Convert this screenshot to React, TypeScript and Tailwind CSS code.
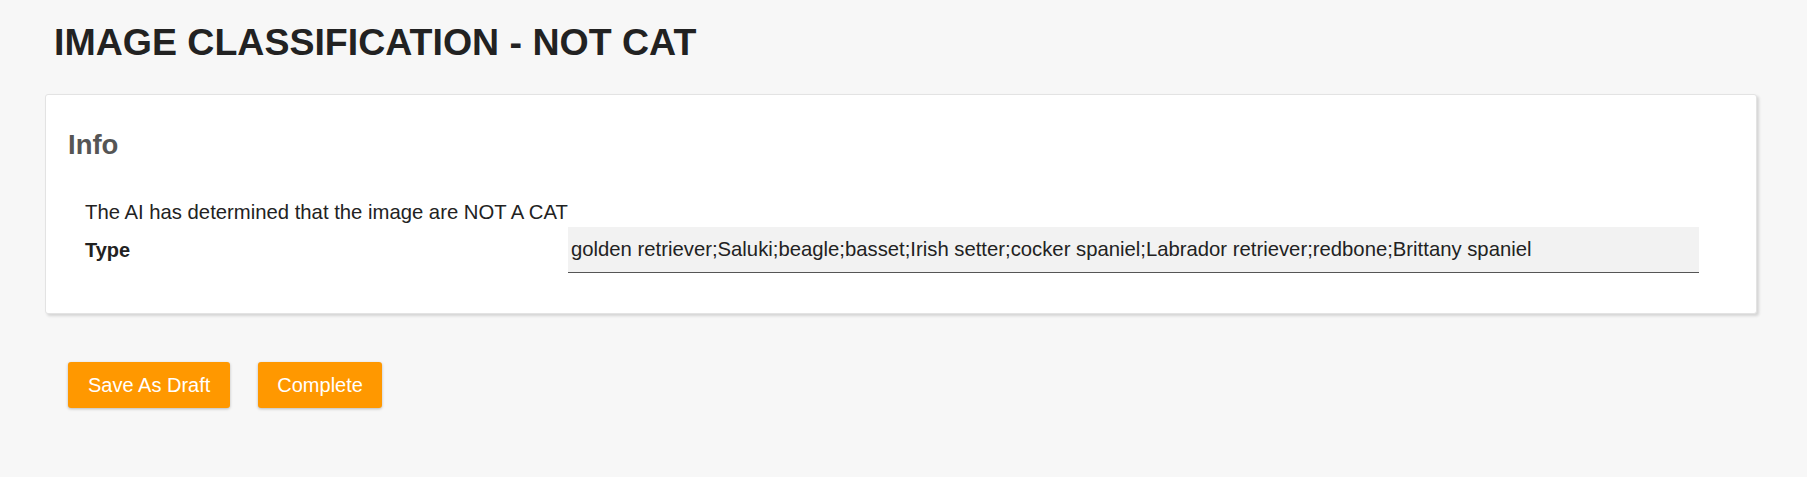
import React from 'react';

const BREEDS = [
  'golden retriever',
  'Saluki',
  'beagle',
  'basset',
  'Irish setter',
  'cocker spaniel',
  'Labrador retriever',
  'redbone',
  'Brittany spaniel',
];

export default function App() {
  return (
    <div className="min-h-screen bg-[#f7f7f7] pl-[45px] pr-[50px] text-[#222] font-['Liberation_Sans',Arial,sans-serif]">
      {/* Page title */}
      <h1 className="pt-[20px] pl-[9px] text-[37.5px] leading-[44px] font-bold">
        IMAGE CLASSIFICATION - NOT CAT
      </h1>

      {/* Info card */}
      <div className="mt-[30px] bg-white border border-[#e3e3e3] rounded-[3px] shadow-[2px_2px_3px_rgba(0,0,0,0.14)] pt-[34px] pb-[40px] pl-[22px]">
        <h2 className="text-[27.5px] leading-[32px] font-bold text-[#555]">Info</h2>

        <div className="mt-[39px] pl-[17px] pr-[57px]">
          <p className="text-[20.3px] leading-[24px]">
            The AI has determined that the image are NOT A CAT
          </p>
          <div className="mt-[3px] flex items-center">
            <label className="w-[483px] shrink-0 text-[20px] font-bold">Type</label>
            <input
              readOnly
              value={BREEDS.join(';')}
              className="flex-1 h-[46px] bg-[#f2f2f2] border-b border-[#555] pl-[3px] text-[20.3px] text-[#222] outline-none"
            />
          </div>
        </div>
      </div>

      {/* Actions */}
      <div className="mt-[48px] ml-[23px] flex gap-[28px]">
        <button className="h-[46px] px-[20px] rounded-[3px] bg-[#ff9800] text-white text-[20px] shadow-[0_1px_3px_rgba(0,0,0,0.25)]">
          Save As Draft
        </button>
        <button className="h-[46px] px-[19px] rounded-[3px] bg-[#ff9800] text-white text-[20px] shadow-[0_1px_3px_rgba(0,0,0,0.25)]">
          Complete
        </button>
      </div>
    </div>
  );
}
